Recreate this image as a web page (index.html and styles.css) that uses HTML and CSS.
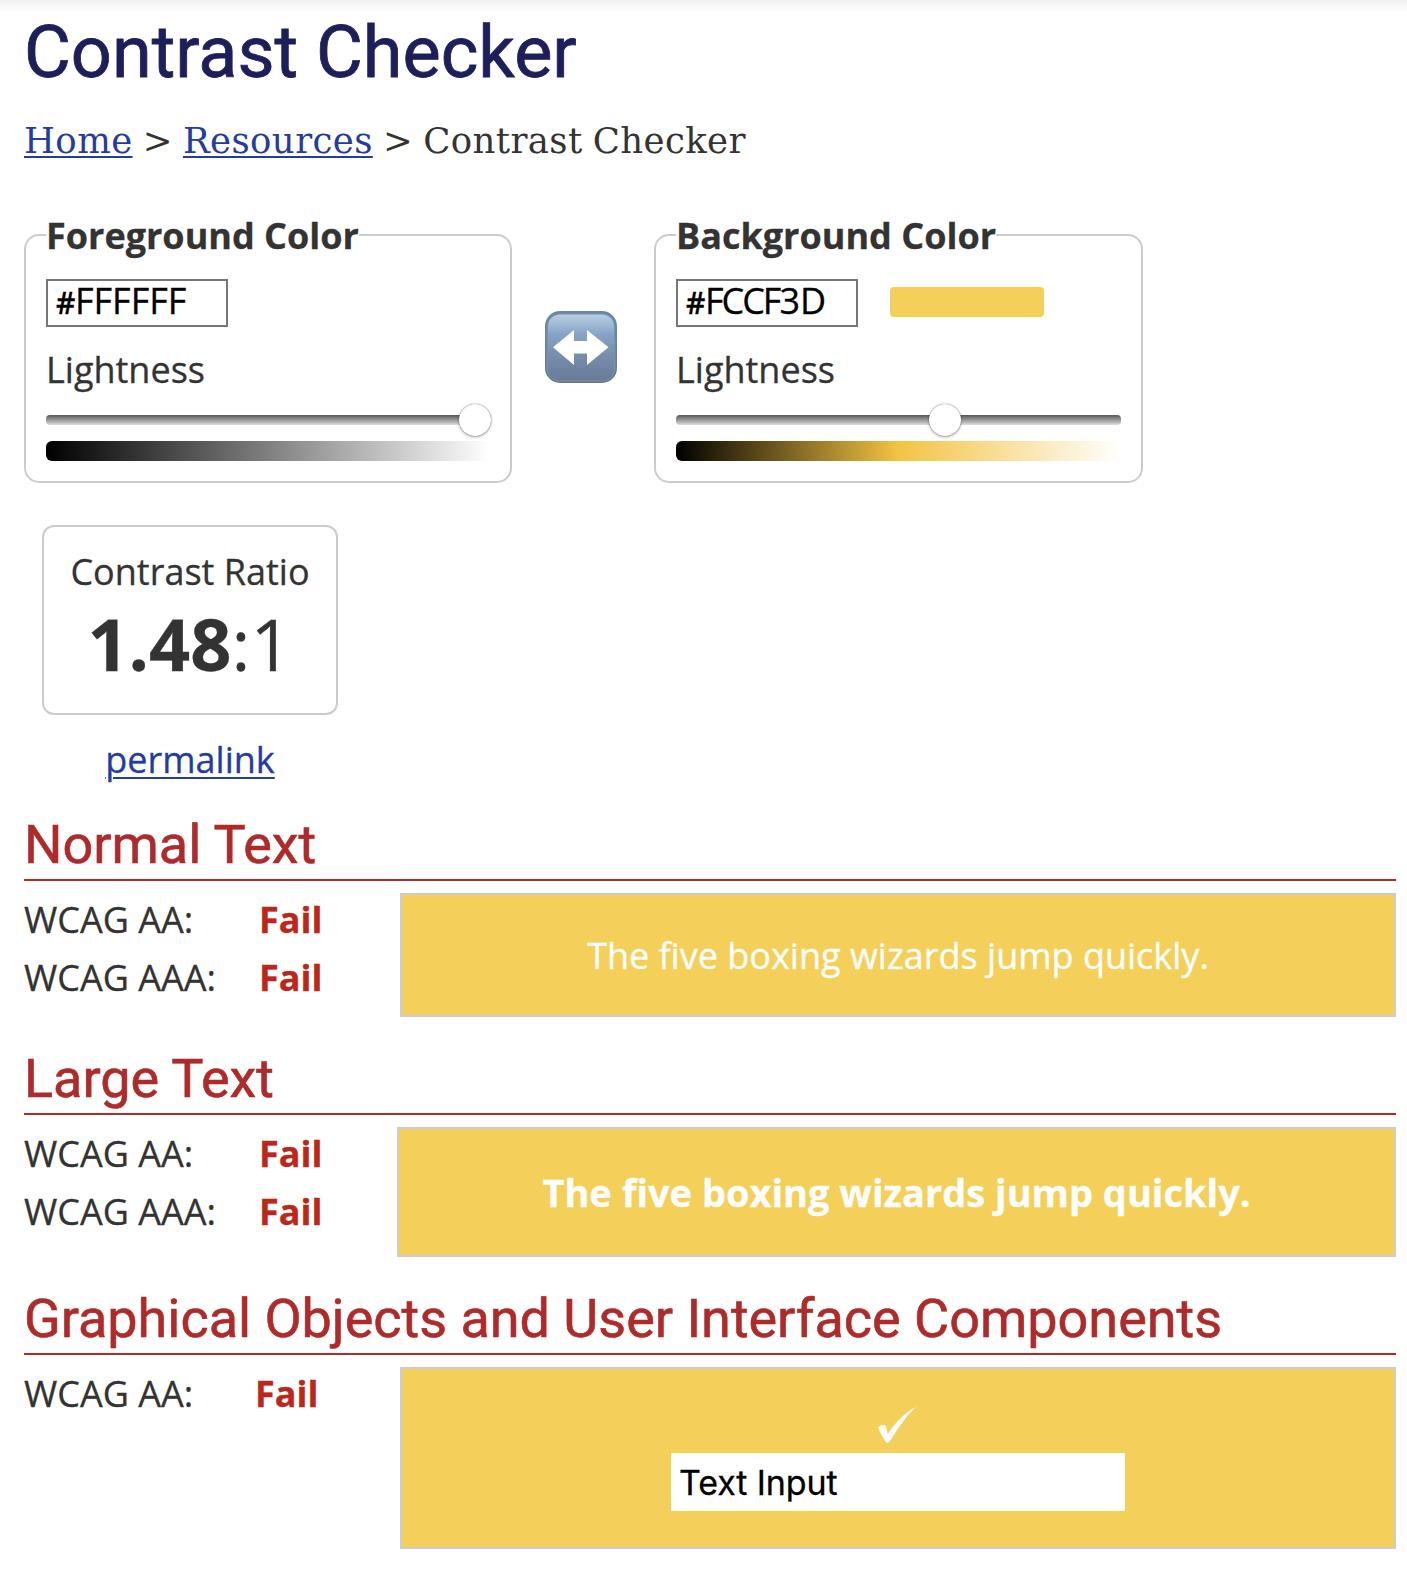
FILE: index.html
```html
<!DOCTYPE html>
<html lang="en">
<head>
<meta charset="utf-8">
<title>Contrast Checker</title>
<link rel="stylesheet" href="styles.css">
</head>
<body>
<h1>Contrast Checker</h1>
<nav class="breadcrumb"><a href="#">Home</a> &gt; <a href="#">Resources</a> &gt; Contrast Checker</nav>

<div class="pickers">
  <fieldset class="picker">
    <legend>Foreground Color</legend>
    <div class="picker-row">
      <div class="hex"><span class="hash">#</span>FFFFFF</div>
    </div>
    <div class="label">Lightness</div>
    <div class="track"><span class="thumb" style="left: 428.5px"></span></div>
    <div class="ramp ramp-gray"></div>
  </fieldset>
  <svg class="swap" viewBox="0 0 72 72" role="img" aria-label="Swap colors">
    <defs>
      <linearGradient id="face" x1="0" y1="0" x2="0" y2="1">
        <stop offset="0" stop-color="#b9cde1"/>
        <stop offset=".12" stop-color="#a6bed8"/>
        <stop offset=".3" stop-color="#86a3c6"/>
        <stop offset=".6" stop-color="#788fad"/>
        <stop offset="1" stop-color="#687b97"/>
      </linearGradient>
      <linearGradient id="rim" x1="0" y1="0" x2="0" y2="1">
        <stop offset="0" stop-color="#6d88a5"/>
        <stop offset="1" stop-color="#62758f"/>
      </linearGradient>
    </defs>
    <rect width="72" height="72" rx="15" fill="url(#rim)"/>
    <rect x="1.5" y="2.5" width="69" height="68" rx="13.5" fill="#7890b0"/>
    <rect x="3" y="3.5" width="66" height="66" rx="12" fill="url(#face)"/>
    <path d="M8 36.3 29 19v11h13V19l21.5 17.3L42 54V42.5H29V54z" fill="#fff"/>
  </svg>
  <fieldset class="picker picker-bg">
    <legend>Background Color</legend>
    <div class="picker-row">
      <div class="hex"><span class="hash">#</span><span class="tight">FCCF</span>3D</div>
      <div class="swatch"></div>
    </div>
    <div class="label">Lightness</div>
    <div class="track"><span class="thumb" style="left: 269px"></span></div>
    <div class="ramp ramp-gold"></div>
  </fieldset>
</div>

<div class="ratio">
  <div class="ratio-box">
    <div class="label">Contrast Ratio</div>
    <div class="ratio-value"><b>1.48</b>:1</div>
  </div>
  <a class="permalink" href="#">permalink</a>
</div>

<section>
  <h2>Normal Text</h2>
  <div class="result">
    <dl>
      <dt>WCAG AA:</dt><dd>Fail</dd>
      <dt>WCAG AAA:</dt><dd>Fail</dd>
    </dl>
    <div class="sample normal">The five boxing wizards jump quickly.</div>
  </div>
</section>

<section>
  <h2>Large Text</h2>
  <div class="result">
    <dl>
      <dt>WCAG AA:</dt><dd>Fail</dd>
      <dt>WCAG AAA:</dt><dd>Fail</dd>
    </dl>
    <div class="sample large">The five boxing wizards jump quickly.</div>
  </div>
</section>

<section>
  <h2>Graphical Objects and User Interface Components</h2>
  <div class="result">
    <dl class="objects">
      <dt>WCAG AA:</dt><dd>Fail</dd>
    </dl>
    <div class="sample graphic">
      <svg class="check" viewBox="0 0 38 36"><path d="M0 20.5C2 18.3 4.500 17.600 7.300 18.300 8.600 20.500 8.800 24 9.800 27 15 19 26 5 38 0 29 8 20 21 12 34 11 36.200 8.500 36.200 7.500 34.500 4 29.500 2 25 0 20.500z" fill="#fff"/></svg>
      <input class="text-input" type="text" value="Text Input">
    </div>
  </div>
</section>
</body>
</html>
```
FILE: styles.css
```css
* { box-sizing: border-box; }

body {
  margin: 0;
  min-height: 1572px;
  padding: 11px 11px 0 24px;
  background: #fff linear-gradient(#f0f0f0, #fff) no-repeat 0 0 / 100% 13px;
  color: #333;
  font: 36px/49px "Open Sans", sans-serif;
  -webkit-text-stroke: .3px;
}

a { color: #253b9e; }

h1 {
  margin: 0;
  color: #1d1f5a;
  font: 400 72px/84px Roboto, sans-serif;
  -webkit-text-stroke: .8px;
}

.breadcrumb {
  margin-top: 21px;
  font: 35.5px/49px "DejaVu Serif", serif;
  letter-spacing: .4px;
  word-spacing: -1.6px;
  white-space: nowrap;
  -webkit-text-stroke: 0;
}
.breadcrumb a {
  text-decoration-thickness: 2px;
  text-underline-offset: 3px;
}

.pickers {
  display: flex;
  margin-top: 45.5px;
}

.picker {
  width: 488px;
  height: 272.5px;
  margin: 0;
  padding: 19.5px 20px 20px;
  border: 2px solid #ccc;
  border-radius: 15px;
}
.picker-bg { width: 489px; }
.picker legend {
  padding: 0;
  font-weight: 700;
  white-space: nowrap;
}
.picker-row {
  display: flex;
  align-items: center;
  gap: 32px;
  height: 48px;
}
.hex {
  width: 182px;
  height: 48px;
  padding-left: 8px;
  border: 2px solid #767676;
  color: #000;
  line-height: 40px;
}
.hash {
  font-size: 30px;
  font-weight: 600;
  letter-spacing: -.5px;
}
.tight { letter-spacing: -2px; }
.swatch {
  width: 154px;
  height: 30px;
  margin-top: -2px;
  border-radius: 4px;
  background: #f4d05b;
}
.picker .label { margin-top: 18px; }

.track {
  position: relative;
  height: 10px;
  margin-top: 21px;
  border-radius: 4px;
  background: linear-gradient(#555, #ddd);
}
.thumb {
  position: absolute;
  top: 5px;
  width: 32px;
  height: 32px;
  margin: -16px 0 0 -16px;
  border-radius: 50%;
  background: #fff;
  box-shadow: 0 0 1px #444, 0 1px 3px rgba(0, 0, 0, .35);
}
.ramp {
  height: 20px;
  margin-top: 16px;
  border-radius: 6px;
}
.ramp-gray { background: linear-gradient(90deg, #000, #fff); }
.ramp-gold { background: linear-gradient(90deg, #000, #f3c344 50%, #fff); }

.swap {
  width: 72px;
  height: 72px;
  margin: 100.5px 37px 0 33px;
}

.ratio {
  display: flex;
  flex-direction: column;
  align-items: center;
  width: 296px;
  margin: 42px 0 29.5px 18px;
}
.ratio-box {
  width: 100%;
  height: 190px;
  padding-top: 20px;
  border: 2px solid #ccc;
  border-radius: 12px;
  text-align: center;
}
.ratio-value {
  padding-right: 8px;
  padding-left: 7px;
  font-size: 72px;
  line-height: 94px;
}
.permalink {
  margin-top: 19.5px;
  text-decoration-thickness: 2px;
  text-underline-offset: 4px;
}

h2 {
  margin: 0;
  padding-bottom: 3px;
  border-bottom: 2px solid #ae2b2b;
  color: #ae2b2b;
  font: 400 54px/63px Roboto, sans-serif;
  letter-spacing: -.03px;
  -webkit-text-stroke: .6px;
}
section { margin-bottom: 30px; }

.result {
  display: flex;
  justify-content: space-between;
}
dl {
  display: grid;
  grid-template-columns: 235px 80px;
  align-content: start;
  margin: 10px 0 0;
  line-height: 58px;
}
dl.objects { grid-template-columns: 231px 80px; }
dd {
  margin: 0;
  color: #bb271a;
  font-weight: 700;
}

.sample {
  width: 996px;
  margin-top: 12px;
  border: 2px solid #ccc;
  background: #f4d05b;
  color: #fff;
  text-align: center;
  white-space: nowrap;
}
.normal {
  height: 124px;
  padding-top: 36px;
}
.large {
  width: 999px;
  height: 130px;
  padding-top: 38px;
  font-size: 38px;
  font-weight: 700;
  line-height: 51px;
}
.graphic {
  display: flex;
  flex-direction: column;
  align-items: center;
  height: 182px;
  padding-top: 38px;
}
.check {
  flex: none;
  width: 38px;
  height: 36px;
  margin-right: 2px;
}
.text-input {
  width: 454px;
  height: 58px;
  margin-top: 10px;
  padding: 1px 8px 0;
  border: 0;
  background: #fff;
  color: #000;
  font: 34px Inter, sans-serif;
  letter-spacing: -.1px;
}
```
